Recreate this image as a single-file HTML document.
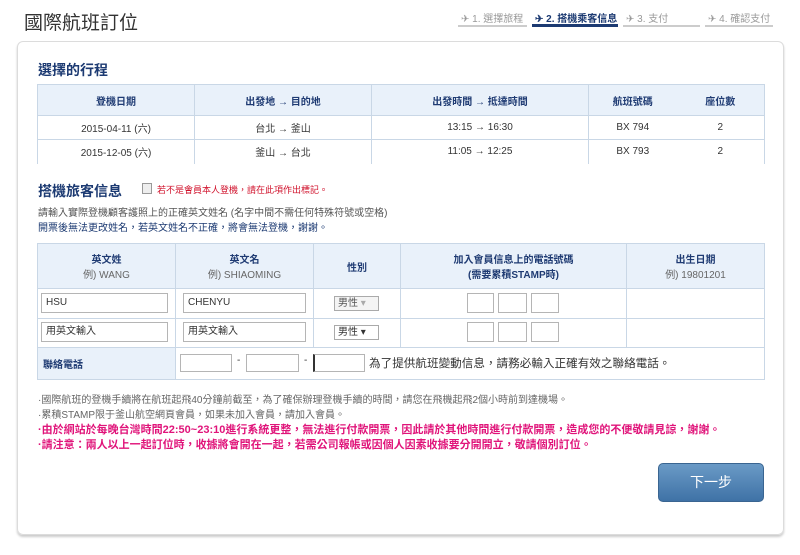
<!DOCTYPE html>
<html><head><meta charset="utf-8"><style>
*{margin:0;padding:0;box-sizing:border-box}
body{width:800px;height:555px;background:#fff;font-family:"Liberation Sans","Noto Sans CJK TC",sans-serif;position:relative;overflow:hidden;color:#333}
.a{position:absolute;white-space:nowrap}
.panel{position:absolute;left:17px;top:41px;width:767px;height:494px;border:1px solid #dcdcdc;border-radius:6px;box-shadow:0 2px 2px #ccc}
.step{position:absolute;top:10px;height:17px;font-size:10px;color:#999;border-bottom:2px solid #ccc;padding-left:3px}
.step.on{color:#1c3a72;font-weight:bold;border-bottom:3px solid #1c3a72}
.t{position:absolute;border-collapse:collapse;font-size:10px;table-layout:fixed}
.t td{border:1px solid #c9d7e6;text-align:center;padding:0}
.t .h td{background:#e9f1fa;color:#1f3b73;font-weight:bold}
.inp{position:absolute;border:1px solid #b5b5b5;background:#fff;font-size:10px;padding-left:4px;line-height:18px;color:#333}
.sel{position:absolute;border:1px solid #aaa;background:#f4f4f4;font-size:10px;padding-left:3px;line-height:13px}
.note{position:absolute;left:38px;font-size:10px;white-space:nowrap}
</style></head><body>
<div class="a" style="left:24px;top:8px;font-size:19px;color:#333">國際航班訂位</div>
<div class="step" style="left:458px;width:69px">✈ 1. 選擇旅程</div>
<div class="step on" style="left:532px;width:86px">✈ 2. 搭機乘客信息</div>
<div class="step" style="left:623px;width:77px">✈ 3. 支付</div>
<div class="step" style="left:705px;width:68px">✈ 4. 確認支付</div>
<div class="panel"></div>
<div class="a" style="left:38px;top:60px;font-size:14px;font-weight:bold;color:#1c3a72">選擇的行程</div>
<table class="t" style="left:37px;top:84px;width:727px">
<colgroup><col style="width:157px"><col style="width:177px"><col style="width:217px"><col style="width:88px"><col style="width:88px"></colgroup>
<tr class="h" style="height:31px"><td>登機日期</td><td>出發地 → 目的地</td><td>出發時間 → 抵達時間</td><td style="border-right:none">航班號碼</td><td style="border-left:none">座位數</td></tr>
<tr style="height:24px"><td>2015-04-11 (六)</td><td>台北 → 釜山</td><td>13:15 → 16:30</td><td style="border-right:none">BX 794</td><td style="border-left:none">2</td></tr>
<tr style="height:24px"><td style="border-bottom:none">2015-12-05 (六)</td><td style="border-bottom:none">釜山 → 台北</td><td style="border-bottom:none">11:05 → 12:25</td><td style="border:none">BX 793</td><td style="border:none;border-right:1px solid #c9d7e6">2</td></tr>
</table>
<div class="a" style="left:38px;top:181px;font-size:14px;font-weight:bold;color:#1c3a72">搭機旅客信息</div>
<div class="a" style="left:142px;top:183px;width:10px;height:11px;border:1px solid #999;background:#eee"></div>
<div class="a" style="left:157px;top:183px;font-size:9px;color:#d0112b">若不是會員本人登機，請在此項作出標記。</div>
<div class="note" style="top:204px;color:#555">請輸入實際登機顧客護照上的正確英文姓名 (名字中間不需任何特殊符號或空格)</div>
<div class="note" style="top:219px;color:#1c3a72">開票後無法更改姓名，若英文姓名不正確，將會無法登機，謝謝。</div>
<table class="t" style="left:37px;top:243px;width:727px">
<colgroup><col style="width:138px"><col style="width:138px"><col style="width:87px"><col style="width:226px"><col style="width:138px"></colgroup>
<tr class="h" style="height:45px"><td>英文姓<br><span style="font-weight:normal;color:#666">例) WANG</span></td><td>英文名<br><span style="font-weight:normal;color:#666">例) SHIAOMING</span></td><td>性別</td><td>加入會員信息上的電話號碼<br>(需要累積STAMP時)</td><td>出生日期<br><span style="font-weight:normal;color:#666">例) 19801201</span></td></tr>
<tr style="height:30px"><td></td><td></td><td></td><td></td><td></td></tr>
<tr style="height:29px"><td></td><td></td><td></td><td></td><td></td></tr>
<tr style="height:32px"><td style="background:#e9f1fa;text-align:left;padding-left:5px;color:#1f3b73;font-weight:bold">聯絡電話</td><td colspan="4" style="text-align:left"></td></tr>
</table>
<div class="inp" style="left:41px;top:293px;width:127px;height:20px">HSU</div>
<div class="inp" style="left:183px;top:293px;width:123px;height:20px">CHENYU</div>
<div class="sel" style="left:334px;top:296px;width:45px;height:15px;color:#555">男性 <span style="color:#aaa">▾</span></div>
<div class="inp" style="left:467px;top:293px;width:27px;height:20px"></div>
<div class="inp" style="left:498px;top:293px;width:29px;height:20px"></div>
<div class="inp" style="left:531px;top:293px;width:28px;height:20px"></div>
<div class="inp" style="left:41px;top:322px;width:127px;height:20px">用英文輸入</div>
<div class="inp" style="left:183px;top:322px;width:123px;height:20px">用英文輸入</div>
<div class="sel" style="left:334px;top:325px;width:45px;height:15px;background:#fff">男性 ▾</div>
<div class="inp" style="left:467px;top:322px;width:27px;height:20px"></div>
<div class="inp" style="left:498px;top:322px;width:29px;height:20px"></div>
<div class="inp" style="left:531px;top:322px;width:28px;height:20px"></div>
<div class="inp" style="left:180px;top:354px;width:52px;height:18px"></div>
<div class="a" style="left:237px;top:355px;font-size:10px">-</div>
<div class="inp" style="left:246px;top:354px;width:53px;height:18px"></div>
<div class="a" style="left:304px;top:355px;font-size:10px">-</div>
<div class="inp" style="left:313px;top:354px;width:52px;height:18px;border-left:2px solid #333"></div>
<div class="a" style="left:369px;top:355px;font-size:11.6px;color:#333">為了提供航班變動信息，請務必輸入正確有效之聯絡電話。</div>
<div class="note" style="top:391px;color:#666">·國際航班的登機手續將在航班起飛40分鐘前截至，為了確保辦理登機手續的時間，請您在飛機起飛2個小時前到達機場。</div>
<div class="note" style="top:406px;color:#666">·累積STAMP限于釜山航空網頁會員，如果未加入會員，請加入會員。</div>
<div class="note" style="top:421px;color:#e0147a;font-weight:bold;font-size:11px">·由於網站於每晚台灣時間22:50~23:10進行系統更整，無法進行付款開票，因此請於其他時間進行付款開票，造成您的不便敬請見諒，謝謝。</div>
<div class="note" style="top:436px;color:#e0147a;font-weight:bold;font-size:11px">·請注意：兩人以上一起訂位時，收據將會開在一起，若需公司報帳或因個人因素收據要分開開立，敬請個別訂位。</div>
<div class="a" style="left:658px;top:463px;width:106px;height:39px;border-radius:5px;background:linear-gradient(#6a9ac6,#3f72a6);border:1px solid #3a6591;color:#fff;font-size:14px;text-align:center;line-height:37px">下一步</div>
</body></html>
